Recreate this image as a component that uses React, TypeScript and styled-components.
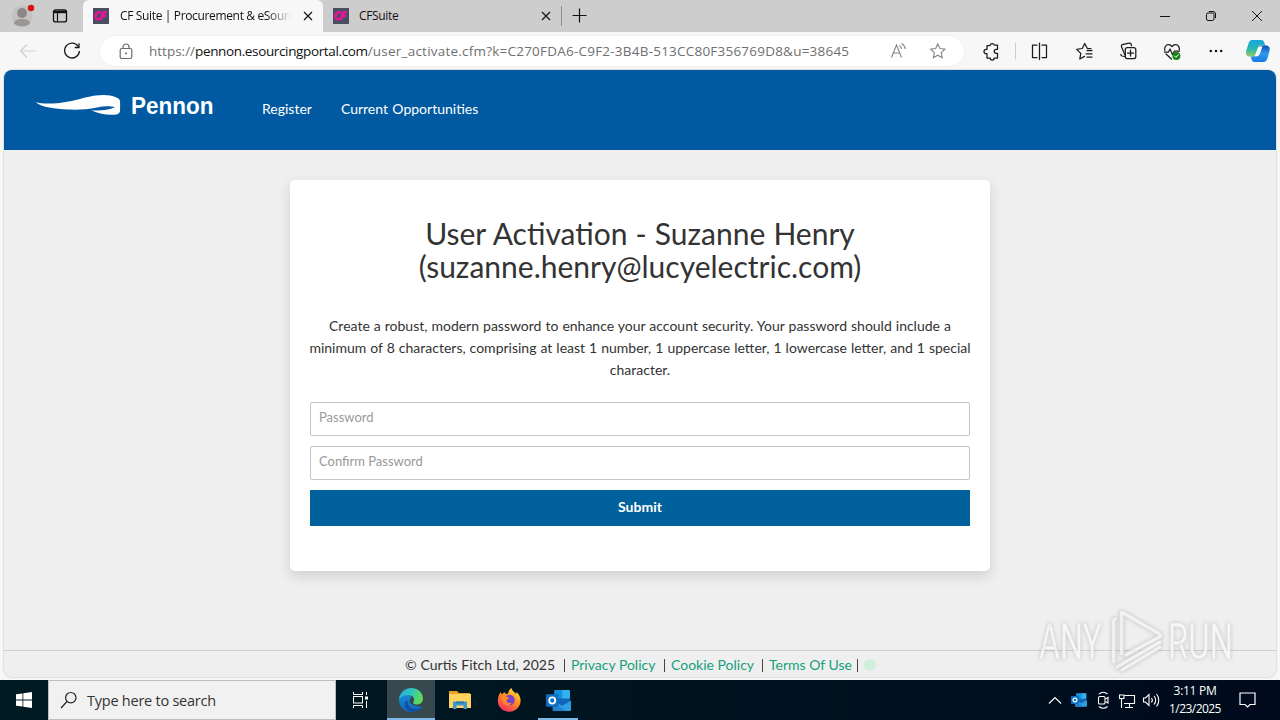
import React from "react";
import styled, { createGlobalStyle } from "styled-components";

const CHROME_FONT = `"Open Sans", "Noto Sans", sans-serif`;

const App = () => {
  return (
    <Screen>
      <GlobalStyle />
      <TabStrip>
        <ProfileIcon />
        <WorkspacesIcon />
        <Tab $active $width={240}>
          <Favicon />
          <TabTitle $fade>CF Suite | Procurement &amp; eSourc</TabTitle>
          <CloseIcon />
        </Tab>
        <Tab $width={238}>
          <Favicon />
          <TabTitle>CFSuite</TabTitle>
          <CloseIcon />
        </Tab>
        <TabDivider />
        <PlusIcon />
        <WindowControls />
      </TabStrip>

      <Toolbar>
        <BackIcon />
        <ReloadIcon />
        <AddressBar>
          <LockIcon />
          <Url>
            https://<UrlHost>pennon.esourcingportal.com</UrlHost>
            <UrlPath>
              /user_activate.cfm?k=C270FDA6-C9F2-3B4B-513CC80F356769D8&amp;u=38645
            </UrlPath>
          </Url>
          <AddressIcons />
        </AddressBar>
        <ToolbarIcons />
      </Toolbar>

      <Viewport>
        <Header>
          <PennonLogo />
          <Nav>
            <NavLink>Register</NavLink>
            <NavLink>Current Opportunities</NavLink>
          </Nav>
        </Header>
        <Main>
          <Card>
            <Title>
              User Activation - Suzanne Henry
              <br />
              (suzanne.henry@lucyelectric.com)
            </Title>
            <Description>
              Create a robust, modern password to enhance your account security.
              Your password should include a minimum of 8 characters, comprising
              at least 1 number, 1 uppercase letter, 1 lowercase letter, and 1
              special character.
            </Description>
            <Form>
              <Input type="password" placeholder="Password" />
              <Input type="password" placeholder="Confirm Password" />
              <SubmitButton type="button">Submit</SubmitButton>
            </Form>
          </Card>
        </Main>
        <Footer>
          <Copyright>© Curtis Fitch Ltd, 2025</Copyright>
          <Bar />
          <FooterLink $width={84}>Privacy Policy</FooterLink>
          <Bar />
          <FooterLink $width={82}>Cookie Policy</FooterLink>
          <Bar />
          <FooterLink $width={84} $tight>Terms Of Use</FooterLink>
          <Bar />
          <StatusDot />
        </Footer>
      </Viewport>

      <Taskbar>
        <StartButton>
          <WindowsIcon />
        </StartButton>
        <SearchBox>
          <SearchIcon />
          <SearchText>Type here to search</SearchText>
        </SearchBox>
        <TaskButtons>
          <TaskButton>
            <TaskViewIcon />
          </TaskButton>
          <TaskButton $active>
            <EdgeIcon />
            <RunningMark $width={48} />
          </TaskButton>
          <TaskButton>
            <FolderIcon />
          </TaskButton>
          <TaskButton>
            <FirefoxIcon />
          </TaskButton>
          <TaskButton>
            <OutlookIcon />
            <RunningMark $width={40} />
          </TaskButton>
        </TaskButtons>
        <Tray>
          <TrayIcons />
          <Clock>
            <span>3:11 PM</span>
            <ClockDate>1/23/2025</ClockDate>
          </Clock>
          <NotificationIcon />
        </Tray>
      </Taskbar>

      <Watermark />
    </Screen>
  );
};

export default App;

/* ---------- browser icons ---------- */

const ProfileIcon = () => (
  <svg width="32" height="32" viewBox="0 0 32 32">
    <circle cx="15" cy="16" r="10.5" fill="#c2c2c2" />
    <circle cx="15" cy="13" r="4.900" fill="#8b8786" />
    <path d="M7 23.500c0-3 2.500-4.500 8-4.500s8 1.500 8 4.500c-2 2-4.500 3-8 3s-6-1-8-3z" fill="#9b9795" />
    <circle cx="24" cy="8" r="3.200" fill="#d8121b" />
  </svg>
);

const WorkspacesIcon = () => (
  <WorkspacesSvg width="16" height="16" viewBox="0 0 16 16" fill="none" stroke="#111">
    <rect x="1.500" y="1.900" width="13" height="12" rx="2.200" strokeWidth="1.300" />
    <path d="M2 3.900h12" strokeWidth="2.600" />
    <path d="M5.500 4v9.800" strokeWidth="1.200" />
  </WorkspacesSvg>
);

const Favicon = () => (
  <svg width="16" height="16" viewBox="0 0 16 16">
    <rect width="16" height="16" fill="#4a4e63" />
    <path
      d="M8.300 5.200C7.500 4 5.500 3.700 4 5c-2 1.700-2.100 4.500-.6 5.700 1.300 1.100 3.500.7 4.700-.5M13.800 4.300c-2.200-.7-3.600 0-4.200 2.200l-1.200 4.800M8 7.800h5"
      fill="none"
      stroke="#f0109b"
      strokeWidth="2.400"
    />
  </svg>
);

const CloseIcon = () => (
  <svg width="10" height="10" viewBox="0 0 10 10" stroke="#1b1b1b" strokeWidth="1.300">
    <path d="M1 1l8 8M9 1L1 9" />
  </svg>
);

const PlusIcon = () => (
  <PlusSvg width="16" height="16" viewBox="0 0 16 16" stroke="#111" strokeWidth="1.200">
    <path d="M.5 7.500h14M7.500 .5v14" />
  </PlusSvg>
);

const WindowControls = () => (
  <ControlsSvg width="120" height="32" viewBox="1160 0 120 32" fill="none" stroke="#111">
    <path d="M1160 16.500h10" />
    <rect x="1206.500" y="13" width="7.500" height="7.500" rx="1.500" />
    <path d="M1208.800 11.500h4.200a2.500 2.500 0 0 1 2.500 2.500v4.200" />
    <path d="M1252 11l10 10M1262 11l-10 10" />
  </ControlsSvg>
);

const BackIcon = () => (
  <BackSvg width="18" height="16" viewBox="0 0 18 16" fill="none" stroke="#cfcfcf" strokeWidth="1.200">
    <path d="M16.500 8H2M8 1.500L1.500 8L8 14.500" />
  </BackSvg>
);

const ReloadIcon = () => (
  <ReloadSvg width="18" height="18" viewBox="0 0 18 18" fill="none" stroke="#1b1b1b" strokeWidth="1.300">
    <path d="M15.500 5A7.400 7.400 0 1 0 16.400 9" />
    <path d="M16 1.200v4.300h-4.300" />
  </ReloadSvg>
);

const LockIcon = () => (
  <LockSvg width="14" height="17" viewBox="0 0 14 17" fill="none" stroke="#6a6a6a" strokeWidth="1.200">
    <rect x="1.200" y="5.500" width="11.600" height="10" rx="1.800" />
    <path d="M4 5.500V4a3 3 0 0 1 6 0v1.500" />
    <circle cx="7" cy="10.500" r="1" fill="#6a6a6a" stroke="none" />
  </LockSvg>
);

const STAR =
  "M8 .9l2.150 4.600 5 .65-3.700 3.500.95 5L8 12.200l-4.400 2.450.95-5L.85 6.150l5-.65z";

const AddressIcons = () => (
  <AddressSvg width="60" height="20" viewBox="890 41 60 20" fill="none" stroke="#858585" strokeWidth="1.100">
    <path d="M891.500 57.500L896.500 45l5 12.500M893.300 53h6.400" />
    <path d="M899.500 45.500c1.300.8 2 2 2 3.500M901.500 43.500c2.300 1.200 3.500 3 3.800 5.500" />
    <g transform="translate(929.800 43)">
      <path d={STAR} />
    </g>
  </AddressSvg>
);

const ToolbarIcons = () => (
  <svg width="300" height="38" viewBox="980 32 300 38" fill="none" stroke="#1b1b1b" strokeWidth="1.250" strokeLinejoin="round" strokeLinecap="round">
    <path d="M987 45.500h3a2.200 2.200 0 0 1 4.300-.3h3.200v4.100h-1.300a2 2 0 0 0 0 4h1.300v4.700h-3.300a2 2 0 0 1-4 0h-3.200v-4.300h-.8a2.200 2.200 0 0 1 0-4.400h.8z" />
    <path d="M1015.500 43v16" stroke="#cdcdcd" strokeWidth="1" />
    <path d="M1037 45h-4.500v12.500h4.500M1042 45h4.500v12.500h-4.500M1039.500 43v16.500" />
    <path d="M1091 48.700h-3.500l-2.800-5.200-2.400 5-5.600.9 4.100 4-1 5.600 4.700-2.600M1087 50.500h5M1086 53.800h6M1087 57h5" />
    <path d="M1124.500 56.500l-2.500-.5c-.8-.2-1.200-.8-1-1.600M1125 55l-3.500-8.300c-.4-1 0-1.700.8-2l6.800-1.600c1-.2 1.700.3 2 1l.5 1.600" />
    <rect x="1125.300" y="47.500" width="10.500" height="11" rx="2" />
    <path d="M1130.500 50v6M1127.500 53h6" />
    <path d="M1164.800 50.500c-.8-3 1-5.800 3.700-5.800 1.700 0 2.700.8 3.500 2 .8-1.200 2-2 3.500-2 2.800 0 4.500 2.700 3.700 5.300M1166 54l5.500 5" />
    <path d="M1164.500 52h4l1.500-3 2.500 5.500 2-3.500h5" />
    <circle cx="1176.400" cy="56" r="4" fill="#168516" stroke="none" />
    <path d="M1174.500 56l1.400 1.400 2.400-2.700" stroke="#fff" strokeWidth="1" />
    <g fill="#1b1b1b" stroke="none">
      <circle cx="1210.800" cy="51" r="1.300" />
      <circle cx="1216" cy="51" r="1.300" />
      <circle cx="1221.200" cy="51" r="1.300" />
    </g>
    <defs>
      <linearGradient id="copilotLeft" x1="0" y1="0" x2="0" y2="1">
        <stop offset="0" stopColor="#1aa5df" />
        <stop offset=".55" stopColor="#27b8b0" />
        <stop offset="1" stopColor="#9bc95c" />
      </linearGradient>
      <linearGradient id="copilotRight" x1="0" y1="0" x2="0" y2="1">
        <stop offset="0" stopColor="#124bb5" />
        <stop offset=".5" stopColor="#2c9bec" />
        <stop offset="1" stopColor="#1779e3" />
      </linearGradient>
    </defs>
    <g stroke="none">
      <path d="M1252 40h9c2.500 0 3.200 1.700 3.800 4l.7 1.500h-4c-2.500 0-3.500 1.500-4.200 4l-1.300 4c-.8 2-2 3-4 3h-2.500c-3 0-4-2.500-3.300-5.500l2-6.500c.8-2.800 1.800-4.500 3.800-4.500z" fill="url(#copilotLeft)" />
      <path d="M1263.500 45.500h2.500c3 0 4.300 2.300 3.500 5.500l-1.800 6.500c-.8 2.800-2 4.500-4.500 4.500h-8.500c-2.500 0-3-2-3.700-4.500l-.5-1h2c2.300 0 3.300-1.300 4-3.500l1.500-4.500c.8-2 2.500-3 5.500-3z" fill="url(#copilotRight)" />
      <path d="M1260 46.500h2.500l-2.500 7c-.8 2-2 3-4.500 3h-.8l2.700-7.500c.6-1.600 1.300-2.500 2.600-2.500z" fill="#f5fbff" />
    </g>
  </svg>
);

/* ---------- page logo ---------- */

const PennonLogo = () => (
  <LogoSvg width="190" height="40" viewBox="35 86 190 40" fill="#fff">
    <path d="M35.500 102.300c6 1.500 14 1.700 24 .7 13-1.300 22-5 34-7.200 9-1.500 17-1.100 22 1.200 4 1.800 4.600 3 4.600 5.500v7c0 3-.8 4.300-3.600 4.900-7.500 1-17-.4-25.500-4.200 8 .6 17 .2 24-3-5-1.500-12-1.200-18 .2-9 2-19 2.500-29 2.100-13-.6-26-2-32.500-7.200z" />
    <text x="131" y="114" fontFamily="Liberation Sans, sans-serif" fontSize="24.500" fontWeight="700" textLength="82.500" lengthAdjust="spacingAndGlyphs">
      Pennon
    </text>
  </LogoSvg>
);

/* ---------- taskbar icons ---------- */

const WindowsIcon = () => (
  <svg width="16" height="16" viewBox="0 0 16 16" fill="#fff">
    <path d="M0 2.300l6.500-.9v6.200H0zM7.300 1.300L16 0v7.600H7.300zM0 8.400h6.500v6.200L0 13.700zM7.300 8.400H16V16l-8.700-1.300z" />
  </svg>
);

const SearchIcon = () => (
  <svg width="18" height="18" viewBox="0 0 18 18" fill="none" stroke="#222" strokeWidth="1.200">
    <circle cx="10.800" cy="6.700" r="5.200" />
    <path d="M7 10.500L1 17" />
  </svg>
);

const TaskViewIcon = () => (
  <svg width="18" height="18" viewBox="0 0 18 18" fill="none" stroke="#fff">
    <path d="M2.500 1v2.500h9V1M2.500 17v-2.500h9V17" />
    <rect x="2.500" y="5.500" width="9" height="6.500" />
    <path d="M15.500 1v3M15.500 10v7" />
    <path d="M14 7h3" strokeWidth="3" />
  </svg>
);

const EdgeIcon = () => (
  <svg width="24" height="24" viewBox="0 0 24 24">
    <defs>
      <linearGradient id="edgeTop" x1="0" y1="0" x2="1" y2=".3">
        <stop offset="0" stopColor="#28a9e0" />
        <stop offset=".5" stopColor="#2bc3c5" />
        <stop offset="1" stopColor="#5fd957" />
      </linearGradient>
      <linearGradient id="edgeBody" x1="0" y1="0" x2="0" y2="1">
        <stop offset="0" stopColor="#1c8fd8" />
        <stop offset="1" stopColor="#0b66c0" />
      </linearGradient>
    </defs>
    <path d="M0 12C0 6 5 4 12 4v8c0 4 5 7 11 6.500C21 22 17 24 12 24 5.400 24 0 18.600 0 12z" fill="url(#edgeBody)" />
    <path d="M0 11.500C.5 5 5.500 0 12 0c7 0 12 4.800 12 10.500 0 3.700-2.700 6-6 6-2.500 0-4-.8-4-1.800 0-.8 1-1.200 1-3C15 9 12.500 7 9.500 7 5 7 1.500 9 0 11.500z" fill="url(#edgeTop)" />
    <path d="M8.700 12.500c-.8 5 3 8.500 8 8.500 2.300 0 4.500-.8 6-2.200C20.500 22.300 16.500 24 13 24c-5-.8-8-5-7-9 .4-1.400 1.300-2.200 2.700-2.500z" fill="#134f9e" />
    <path d="M12 10.500c1.200 0 2.300.8 2.300 2s-1 1.500-.8 2.500c.3 1.200 2 2 4.500 2 .8 0 1.700-.1 2.400-.4-1.500 1.300-3.400 1.500-5 1-2.800-.8-4.900-2.600-4.900-5 0-1.200.5-2.100 1.500-2.100z" fill="#39474c" />
  </svg>
);

const FolderIcon = () => (
  <svg width="22" height="20" viewBox="0 0 22 20">
    <path d="M0 1h8l2 2h11v4H0z" fill="#e5a323" />
    <rect y="4" width="22" height="14" fill="#ffd35f" />
    <path d="M4 19v-7.500h14V19h-3.500v-3.500h-7V19z" fill="#3e97d1" />
    <path d="M7 11.500h8v2H7z" fill="#2e78a8" />
  </svg>
);

const FirefoxIcon = () => (
  <svg width="24" height="24" viewBox="0 0 24 24">
    <defs>
      <linearGradient id="foxBody" x1=".8" y1="0" x2=".2" y2="1">
        <stop offset="0" stopColor="#ffe83a" />
        <stop offset=".45" stopColor="#ff8a20" />
        <stop offset="1" stopColor="#f5276b" />
      </linearGradient>
    </defs>
    <path d="M3.500 4c.3 1 .8 1.700 1.500 2.200C6 5 7 4.500 8 4.300 8 5 8.300 5.600 9 6c1-.3 1.500-.2 2-.2C11.500 3 12.500 1 14.500 0c.3 2.500 2 3.300 3.500 4.700L19 6l.7-2C22.500 7 24 10 23.500 14c-.7 5.500-5.500 9.700-11.300 9.700C5.800 23.700.8 19 .8 13c0-3.500 1-6.500 2.700-9z" fill="url(#foxBody)" />
    <circle cx="12.500" cy="12" r="5.200" fill="#7542c9" />
    <path d="M5 8.500c3-1 5.500 0 7.500 2.300-2 .2-3 .7-3 2 0 2 2.500 3 5 1.700C14 18 7 18.500 5.500 13z" fill="#ff8b23" />
  </svg>
);

const OutlookGlyph = () => (
  <>
    <rect x="8" y="1" width="15" height="16" rx="1" fill="#1066b5" />
    <path d="M8 1h7.500v8H8z" fill="#1490df" />
    <path d="M15.500 1H22a1 1 0 0 1 1 1v7h-7.500z" fill="#32b3ee" />
    <path d="M6.500 11l9 5 8.500-5v9a1 1 0 0 1-1 1H7.500a1 1 0 0 1-1-1z" fill="#2f9fe0" />
    <path d="M6.500 14l14 7h-13a1 1 0 0 1-1-1z" fill="#1d85cf" />
    <rect y="5" width="12" height="12" rx="1" fill="#0c6fc4" />
    <circle cx="6" cy="11" r="2.900" fill="none" stroke="#fff" strokeWidth="1.700" />
  </>
);

const OutlookIcon = () => (
  <svg width="25" height="23" viewBox="0 0 24 22">
    <OutlookGlyph />
  </svg>
);

const TrayIcons = () => (
  <svg width="114" height="24" viewBox="1047 688 114 24" fill="none" stroke="#fff" strokeWidth="1.100">
    <path d="M1049 703.500l6-6 6 6" />
    <svg x="1071" y="692" width="16" height="16" viewBox="0 0 24 22" stroke="none">
      <OutlookGlyph />
    </svg>
    <rect x="1098.500" y="696.500" width="6.500" height="7.500" rx="1.300" />
    <path d="M1105.500 699l2.500-1.500v5.500l-2.500-1.500M1099 694c2.500-2 6-2 8.500 0M1099 706.500c2.500 2 6 2 8.500 0" />
    <path d="M1124.500 695.500h10v8h-10.500M1129.500 703.500v3.500M1125 707.500h8" />
    <path d="M1119.500 695h4.500v3.500h-4.500zM1121.500 698.500v9.500" />
    <path d="M1143.500 698h2l3.500-3.500v11l-3.500-3.500h-2z" />
    <path d="M1151.500 698c1 1.200 1 3 0 4.500M1154 696c2 2.500 2 6 0 8.500M1156.500 694c3 3.500 3 9 0 12.500" />
  </svg>
);

const NotificationIcon = () => (
  <NotificationSvg width="17" height="17" viewBox="0 0 17 17" fill="none" stroke="#fff" strokeWidth="1.200">
    <path d="M1 1h15v11.500h-5L8.500 15 6 12.500H1z" />
  </NotificationSvg>
);

const PLAY_MARK =
  "M1113.500 662v-41q0-2 2-2M1121.500 654v-42l38 22M1126 655l35-19M1117 667l5-3 38-22M1122 670l38-23";

const Watermark = () => (
  <WatermarkSvg width="210" height="76" viewBox="1031 601 210 76">
    <g
      fontFamily="Roboto, sans-serif"
      fontSize="50"
      fontWeight="400"
      fill="#f9f9f9"
      stroke="#d8d8d8"
      strokeWidth=".6"
    >
      <text x="1039" y="659" textLength="63" lengthAdjust="spacingAndGlyphs">ANY</text>
      <text x="1168" y="659" textLength="65" lengthAdjust="spacingAndGlyphs">RUN</text>
    </g>
    <g fill="none" strokeLinejoin="round" strokeLinecap="round">
      <path d={PLAY_MARK} stroke="#dadada" strokeWidth="4.600" />
      <path d={PLAY_MARK} stroke="#f6f6f6" strokeWidth="2.600" />
    </g>
  </WatermarkSvg>
);

/* ---------- styles ---------- */

const GlobalStyle = createGlobalStyle`
  * {
    box-sizing: border-box;
  }

  body {
    margin: 0;
    overflow: hidden;
  }

  svg {
    display: block;
    flex-shrink: 0;
  }
`;

const Screen = styled.div`
  position: relative;
  display: flex;
  flex-direction: column;
  width: 1280px;
  height: 720px;
  background: #f7f7f7;
  font-family: ${CHROME_FONT};
`;

const TabStrip = styled.div`
  display: flex;
  align-items: center;
  height: 32px;
  padding-left: 7px;
  background: #cdcdcd;
`;

const WorkspacesSvg = styled.svg`
  margin-left: 13px;
`;

const Tab = styled.div<{ $active?: boolean; $width: number }>`
  display: flex;
  align-items: center;
  width: ${({ $width }) => $width}px;
  height: 32px;
  padding: 0 10px;
  background: ${({ $active }) => ($active ? "#f7f7f7" : "transparent")};
  border-radius: 6px 6px 0 0;
  margin-left: ${({ $active }) => ($active ? 15 : 0)}px;
`;

const TabTitle = styled.span<{ $fade?: boolean }>`
  flex: 1;
  margin: 0 8px 0 10px;
  color: #111;
  font-size: 12px;
  letter-spacing: -0.35px;
  line-height: 18px;
  white-space: nowrap;
  ${({ $fade }) =>
    $fade &&
    "padding-left: 1px; mask-image: linear-gradient(90deg, #000 84%, transparent 98%);"}
`;

const TabDivider = styled.div`
  width: 1px;
  height: 20px;
  background: #8d8d8d;
`;

const PlusSvg = styled.svg`
  margin-left: 10px;
`;

const ControlsSvg = styled.svg`
  margin-left: auto;
`;

const Toolbar = styled.div`
  display: flex;
  align-items: center;
  height: 38px;
  background: #f7f7f7;
`;

const BackSvg = styled.svg`
  margin-left: 19px;
`;

const ReloadSvg = styled.svg`
  margin-left: 26px;
`;

const AddressBar = styled.div`
  display: flex;
  align-items: center;
  width: 864px;
  height: 30px;
  margin: 0 16px 0 19px;
  background: #fff;
  border-radius: 15px;
  box-shadow: 0 0 2px rgba(0, 0, 0, 0.08);
`;

const LockSvg = styled.svg`
  margin-left: 19px;
`;

const Url = styled.div`
  flex: 1;
  margin-left: 16px;
  color: #707070;
  font-size: 13.5px;
  line-height: 20px;
  white-space: nowrap;
`;

const UrlHost = styled.span`
  color: #111;
  letter-spacing: -0.36px;
`;

const UrlPath = styled.span`
  letter-spacing: 0.22px;
`;

const AddressSvg = styled.svg`
  margin-right: 14px;
`;

const Viewport = styled.div`
  display: flex;
  flex-direction: column;
  height: 607px;
  margin: 0 4px 3px;
  overflow: hidden;
  background: #efefef;
  border-radius: 8px;
  box-shadow: 0 0 1px 1px rgba(0, 0, 0, 0.1);
  color: #333;
  font-family: Lato, sans-serif;
`;

const Header = styled.header`
  display: flex;
  height: 80px;
  flex-shrink: 0;
  background: #0059a1;
`;

const LogoSvg = styled.svg`
  margin: 16px 0 0 31px;
`;

const Nav = styled.nav`
  display: flex;
  gap: 29px;
  margin: 28px 0 0 37px;
`;

const NavLink = styled.a`
  color: #fff;
  font-size: 14px;
  line-height: 22px;
  word-spacing: 0.8px;
`;

const Main = styled.main`
  flex: 1;
  padding-top: 30px;
`;

const Card = styled.section`
  width: 700px;
  height: 391px;
  margin: 0 auto;
  padding: 37px 20px 0;
  background: #fff;
  border-radius: 5px;
  box-shadow: 0 5px 14px rgba(0, 0, 0, 0.13);
  text-align: center;
`;

const Title = styled.h1`
  margin: 0;
  color: #333;
  font-size: 30px;
  font-weight: 400;
  line-height: 33px;
  word-spacing: 0.4px;
`;

const Description = styled.p`
  margin: 32px -10px 21px;
  color: #333;
  font-size: 14px;
  line-height: 22px;
  word-spacing: 0.42px;
`;

const Form = styled.form`
  display: flex;
  flex-direction: column;
  gap: 10px;
`;

const Input = styled.input`
  height: 34px;
  padding: 0 8px 4px;
  background: #fff;
  border: 1px solid #c4c4c4;
  border-radius: 2px;
  font-family: Lato, sans-serif;
  font-size: 13px;

  &::placeholder {
    color: #999;
  }
`;

const SubmitButton = styled.button`
  height: 36px;
  padding: 0 0 3px;
  background: #00619c;
  border: 0;
  color: #fff;
  font-family: Lato, sans-serif;
  font-size: 14px;
  font-weight: 700;
`;

const Footer = styled.footer`
  display: flex;
  align-items: center;
  height: 27px;
  padding: 2px 0 0 401px;
  border-top: 1px solid #cfcfcf;
  font-size: 14px;
  line-height: 20px;
  white-space: nowrap;
`;

const Copyright = styled.span`
  width: 159px;
  word-spacing: 0.35px;
`;

const Bar = styled.span`
  width: 1px;
  height: 13px;
  background: #444;
`;

const FooterLink = styled.a<{ $width: number; $tight?: boolean }>`
  width: ${({ $width }) => $width}px;
  margin: 0 ${({ $tight }) => ($tight ? 4 : 9)}px 0 6px;
  color: #16a07c;
`;

const StatusDot = styled.span`
  width: 12px;
  height: 12px;
  margin-left: 6px;
  background: #d0eeda;
  border-radius: 50%;
`;

const Taskbar = styled.div`
  display: flex;
  height: 40px;
  background: linear-gradient(90deg, #001a24, #001520 45%, #000a1c);
`;

const StartButton = styled.div`
  display: flex;
  align-items: center;
  justify-content: center;
  width: 48px;
`;

const SearchBox = styled.div`
  display: flex;
  align-items: center;
  gap: 9px;
  width: 288px;
  padding-left: 11px;
  background: #f1f1f1;
  border: 1px solid #bdbdbd;
`;

const SearchText = styled.span`
  color: #333;
  font-size: 14.5px;
  letter-spacing: -0.24px;
`;

const TaskButtons = styled.div`
  display: flex;
  gap: 1px;
`;

const TaskButton = styled.div<{ $active?: boolean }>`
  position: relative;
  display: flex;
  align-items: center;
  justify-content: center;
  width: 48px;
  margin-left: ${({ $active }) => ($active ? 2 : 0)}px;
  background: ${({ $active }) => ($active ? "#37484f" : "transparent")};
`;

const RunningMark = styled.span<{ $width: number }>`
  position: absolute;
  bottom: 0;
  width: ${({ $width }) => $width}px;
  height: 2px;
  background: #7cb9e8;
`;

const Tray = styled.div`
  display: flex;
  align-items: center;
  margin-left: auto;
  width: 233px;
`;

const Clock = styled.div`
  display: flex;
  flex-direction: column;
  align-items: center;
  width: 68px;
  color: #fff;
  font-size: 12px;
  line-height: 18px;
  letter-spacing: -0.3px;
  white-space: nowrap;
`;

const ClockDate = styled.span`
  letter-spacing: -0.55px;
`;

const NotificationSvg = styled.svg`
  margin-left: 10px;
`;

// sits above the page and is not part of any panel
const WatermarkSvg = styled.svg`
  position: absolute;
  top: 601px;
  left: 1031px;
  overflow: visible;
  opacity: 0.8;
  filter: drop-shadow(0 0 2px rgba(0, 0, 0, 0.2));
`;
